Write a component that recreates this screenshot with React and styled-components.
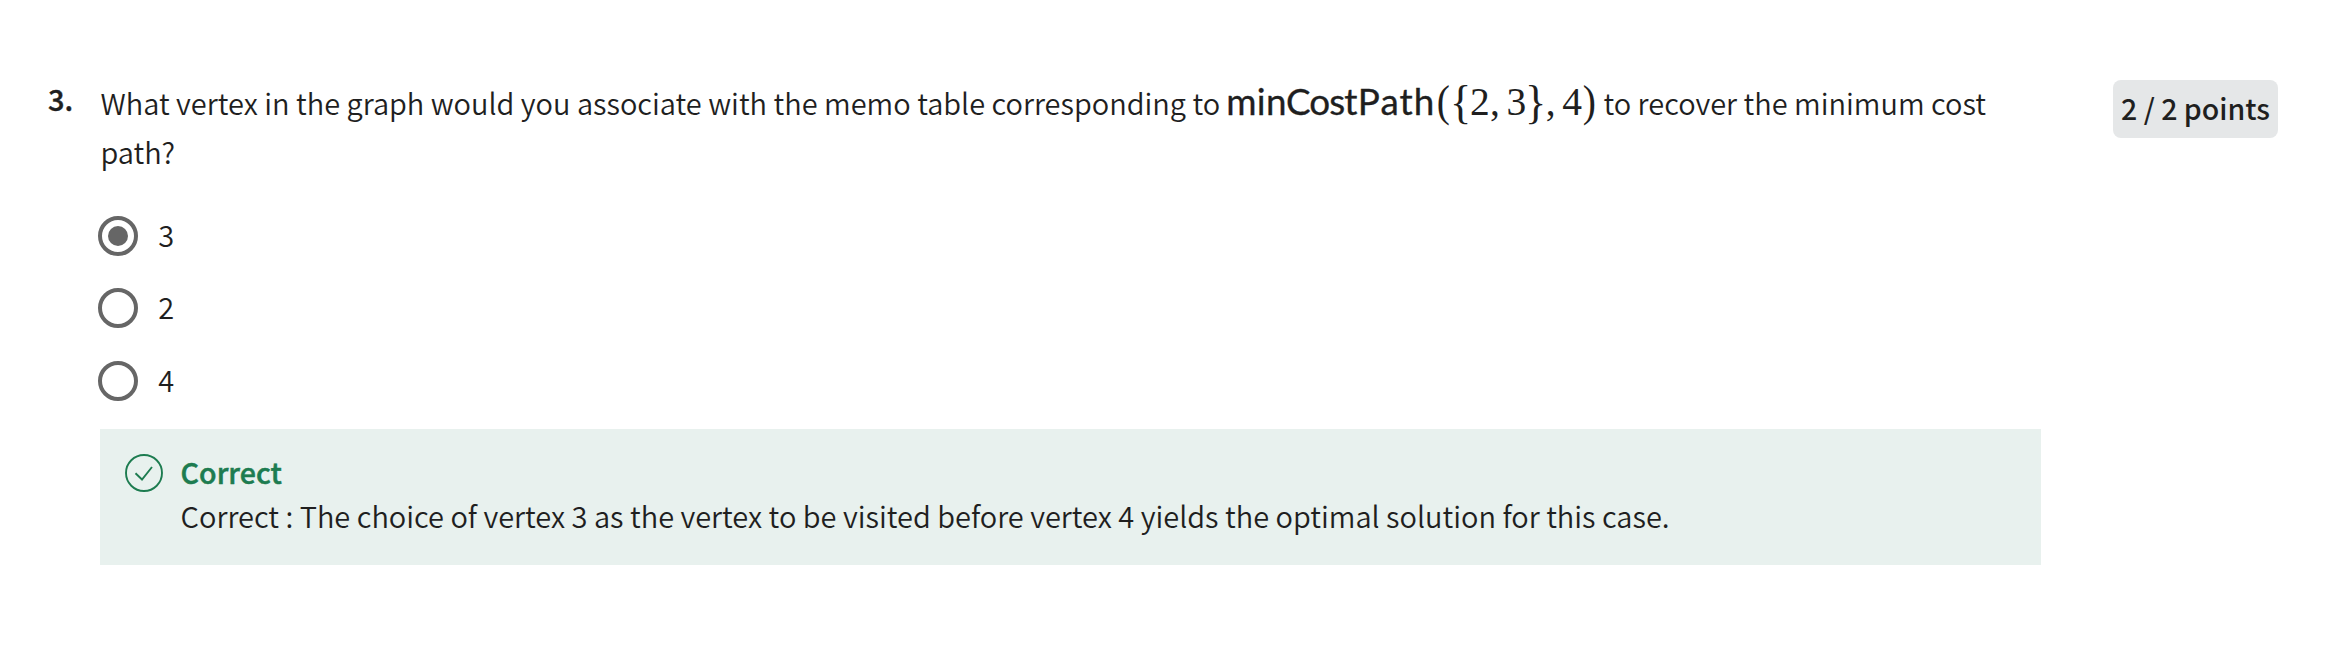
import React from "react";
import styled, { createGlobalStyle } from "styled-components";

const GlobalStyle = createGlobalStyle`
  *, *::before, *::after { box-sizing: border-box; }
  body {
    margin: 0;
    background: #fff;
    color: #1f1f1f;
    font-family: "Noto Sans CJK SC", "Noto Sans", sans-serif;
    font-size: 28.98px;
    font-weight: 350;
  }
`;

const Page = styled.main`
  display: flex;
  align-items: flex-start;
  height: 669px;
  padding: 73px 70px 0 48px;
`;

const QuestionNumber = styled.div`
  width: 52px;
  flex: none;
  padding-top: 1px;
  font-weight: 500;
  line-height: 49px;
  -webkit-text-stroke: 0.4px currentColor;
`;

const Content = styled.section`
  width: 1941px;
  flex: none;
  padding-top: 5px;
`;

const Prompt = styled.p`
  margin: 0;
  padding-left: 0.5px;
  line-height: 49px;
`;

const Formula = styled.span`
  white-space: nowrap;
  line-height: 0;
  margin-left: -0.5px;
`;

const Operator = styled.span`
  display: inline-block;
  width: 209.5px;
  font-family: Lato, sans-serif;
  font-size: 36.8px;
  font-weight: 400;
  -webkit-text-stroke: 0.35px currentColor;
`;

const OperatorWord = styled.span`
  letter-spacing: ${(p) => p.$tracking}px;
  margin-right: ${(p) => p.$gap || 0}px;
`;

const MathGlyph = styled.span`
  display: inline-flex;
  justify-content: center;
  width: ${(p) => p.$width}px;
  margin-right: ${(p) => p.$gap || 0}px;
  font-family: "Liberation Serif", serif;
  font-size: 39.5px;
  font-weight: 400;
`;

const Paren = styled(MathGlyph)`
  transform: translateY(-1px) scaleY(1.13);
`;

const Brace = styled(MathGlyph)`
  transform: scale(1.12, 1.2);
`;

const Options = styled.div`
  display: flex;
  flex-direction: column;
  margin-top: 23.6px;
`;

const Option = styled.label`
  display: flex;
  align-items: center;
  height: 72.5px;
  margin-left: -2px;
  gap: 20.3px;
`;

const Radio = styled.span`
  display: flex;
  align-items: center;
  justify-content: center;
  width: 40px;
  height: 40px;
  border: 4px solid #666;
  border-radius: 50%;

  &::after {
    content: "";
    width: 20px;
    height: 20px;
    border-radius: 50%;
    background: ${(p) => (p.$checked ? "#666" : "transparent")};
  }
`;

const OptionText = styled.span`
  line-height: 40px;
  padding-bottom: 4px;
`;

const Feedback = styled.div`
  display: flex;
  align-items: flex-start;
  height: 136px;
  margin-top: 11.9px;
  padding: 20px 25px;
  gap: 17.6px;
  background: #e8f1ee;
`;

const CheckIcon = styled.svg`
  width: 38px;
  height: 38px;
  margin-top: 5px;
  flex: none;
  fill: none;
  stroke: #1d7c50;
  stroke-width: 1.9;
`;

const FeedbackTitle = styled.div`
  color: #1d7c50;
  font-size: 28.6px;
  font-weight: 500;
  line-height: 46px;
  -webkit-text-stroke: 0.5px currentColor;
`;

const FeedbackText = styled.div`
  line-height: 40px;
`;

const Points = styled.div`
  width: 165px;
  height: 58px;
  flex: none;
  margin: 7px 0 0 72px;
  border-radius: 8px;
  background: #e5e7e8;
  font-size: 28.5px;
  font-weight: 500;
  line-height: 55px;
  text-align: center;
  white-space: nowrap;
`;

const options = [
  { value: "3", checked: true },
  { value: "2", checked: false },
  { value: "4", checked: false },
];

export default function App() {
  return (
    <>
      <GlobalStyle />
      <Page>
        <QuestionNumber>3.</QuestionNumber>
        <Content>
          <Prompt>
            What vertex in the graph would you associate with the memo table corresponding to{" "}
            <Formula>
              <Operator>
                <OperatorWord $tracking={0.4} $gap={-1}>min</OperatorWord>
                <OperatorWord $tracking={-0.9} $gap={1.2}>Cost</OperatorWord>
                <OperatorWord $tracking={1.1}>Path</OperatorWord>
              </Operator>
              <Paren $width={15.1}>(</Paren>
              <Brace $width={19.4}>{"{"}</Brace>
              <MathGlyph $width={19.4}>2</MathGlyph>
              <MathGlyph $width={10.7} $gap={6.4}>,</MathGlyph>
              <MathGlyph $width={19.4}>3</MathGlyph>
              <Brace $width={19.4}>{"}"}</Brace>
              <MathGlyph $width={10.7} $gap={6.4}>,</MathGlyph>
              <MathGlyph $width={19.4}>4</MathGlyph>
              <Paren $width={15.1}>)</Paren>
            </Formula>{" "}
            to recover the minimum cost path?
          </Prompt>
          <Options>
            {options.map((o) => (
              <Option key={o.value}>
                <Radio $checked={o.checked} />
                <OptionText>{o.value}</OptionText>
              </Option>
            ))}
          </Options>
          <Feedback>
            <CheckIcon viewBox="0 0 38 38">
              <circle cx="19" cy="19" r="18" />
              <path d="M10.5 19.3 17 25.5 27 13" />
            </CheckIcon>
            <div>
              <FeedbackTitle>Correct</FeedbackTitle>
              <FeedbackText>
                Correct : The choice of vertex 3 as the vertex to be visited before vertex 4 yields the optimal solution for this case.
              </FeedbackText>
            </div>
          </Feedback>
        </Content>
        <Points>2 / 2 points</Points>
      </Page>
    </>
  );
}
